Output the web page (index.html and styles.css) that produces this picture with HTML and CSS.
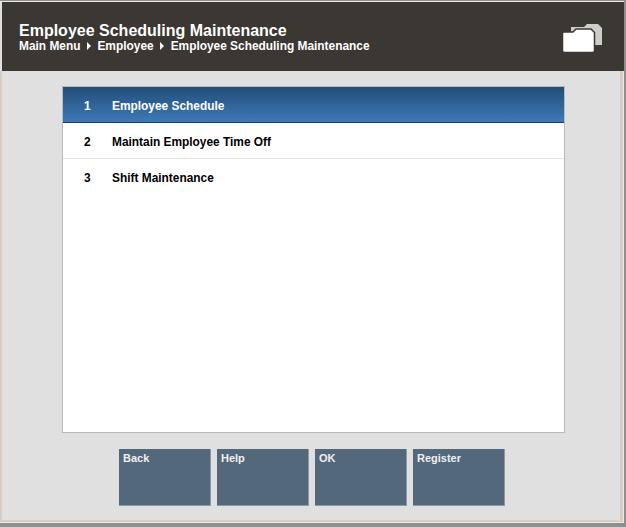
FILE: index.html
```
<!DOCTYPE html>
<html lang="en">
<head>
    <meta charset="UTF-8">
    <title>Employee Scheduling Maintenance</title>
    <link rel="stylesheet" href="styles.css">
</head>
<body>
    <div class="window">
        <div class="header">
            <div class="header-text">
                <h1>Employee Scheduling Maintenance</h1>
                <div class="crumbs">
                    <span>Main Menu</span>
                    <i class="crumb-arrow"></i>
                    <span>Employee</span>
                    <i class="crumb-arrow"></i>
                    <span>Employee Scheduling Maintenance</span>
                </div>
            </div>
            <svg class="folders" width="41" height="30" viewBox="0 0 41 30">
                <path fill="#cdcdcd" d="M9 4H22L25 1H36L40 5V22H9z"/>
                <path fill="#fff" stroke="#3b3733" stroke-width="1.500" d="M.500 10.500Q.500 9 2 9H11L14 6H29L32.500 9.500V27.500Q32.500 29.500 30.500 29.500H2.500Q.500 29.500 .500 27.500z"/>
            </svg>
        </div>
        <div class="content">
            <div class="menu">
                <div class="menu-item selected"><span class="num">1</span><span class="label">Employee Schedule</span></div>
                <div class="menu-item"><span class="num">2</span><span class="label">Maintain Employee Time Off</span></div>
                <div class="menu-item"><span class="num">3</span><span class="label">Shift Maintenance</span></div>
            </div>
            <div class="buttons">
                <button>Back</button>
                <button>Help</button>
                <button>OK</button>
                <button>Register</button>
            </div>
        </div>
    </div>
</body>
</html>
```

FILE: styles.css
```
* {
    box-sizing: border-box;
    margin: 0;
    padding: 0;
    font-family: "Liberation Sans", Arial, sans-serif;
}

html, body {
    width: 626px;
    height: 527px;
    overflow: hidden;
    background: #8f8f8f;
}

body {
    padding-top: 1px;
}

.window {
    width: 624px;
    height: 522px;
    display: flex;
    flex-direction: column;
    background: #e0e0e0;
    border-top: 1px solid #ececec;
}

.header {
    height: 69px;
    margin-left: 2px;
    background: #3b3733;
    display: flex;
    align-items: center;
    justify-content: space-between;
    padding: 2px 21px 0 17px;
    color: #fff;
}

.header h1 {
    font-size: 16px;
    font-weight: bold;
    line-height: 17px;
}

.crumbs {
    display: flex;
    align-items: center;
    gap: 5px;
    font-size: 11.900px;
    font-weight: bold;
    line-height: 15px;
}

.crumb-arrow {
    width: 0;
    height: 0;
    margin: 0 1.500px;
    border-left: 4px solid #fff;
    border-top: 4px solid transparent;
    border-bottom: 4px solid transparent;
}

.content {
    flex: 1;
    display: flex;
    flex-direction: column;
    align-items: flex-start;
    padding: 15px 0 0 62px;
    box-shadow:
        inset -1px -1px 0 #ece8e4,
        inset -4px -3px 0 #d8cec6,
        inset 2px 0 0 #d8cec6;
}

.menu {
    width: 503px;
    height: 347px;
    background: #fff;
    border: 1px solid #b9b9b9;
}

.menu-item {
    height: 36px;
    padding-top: 2px;
    display: flex;
    align-items: center;
    font-size: 11.900px;
    font-weight: bold;
    color: #000;
    border-bottom: 1px solid #e6e6e6;
}

.menu-item:last-child {
    border-bottom: none;
}

.menu-item.selected {
    color: #fff;
    background: linear-gradient(#234c78, #3d7ab8);
    border-bottom: 1px solid #0f3f6e;
}

.num {
    width: 49px;
    padding-left: 21px;
}

.buttons {
    display: flex;
    gap: 6px;
    margin: 16px 0 0 57px;
}

button {
    width: 92px;
    height: 57px;
    background: #54687c;
    border: none;
    border-right: 1px solid #8d99a5;
    border-bottom: 1px solid #8d99a5;
    color: #eef0f2;
    font-size: 11px;
    font-weight: bold;
    text-align: left;
    display: flex;
    padding: 3px 4px;
}
```
